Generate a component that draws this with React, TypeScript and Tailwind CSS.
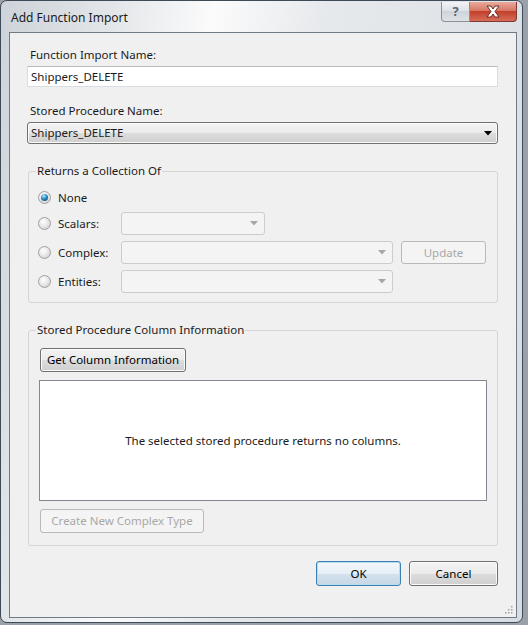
import React from "react";

const font = { fontFamily: '"Noto Sans", "Noto Sans CJK KR", sans-serif' };

const Arrow = ({ color }: { color: string }) => (
  <svg width="8" height="5" viewBox="0 0 8 5">
    <polygon points="0,0 8,0 4,4.5" fill={color} />
  </svg>
);

const Radio = ({ checked }: { checked?: boolean }) => (
  <span className="w-[13px] h-[13px] shrink-0 rounded-full border border-[#a0a0a0] bg-[radial-gradient(circle_at_40%_35%,#ffffff_0%,#e6e6e6_50%,#c6c6c6_100%)] flex items-center justify-center">
    {checked && (
      <span className="w-[7px] h-[7px] rounded-full bg-[radial-gradient(circle_at_40%_30%,#b8ecff_0%,#2a88c0_45%,#0c3f63_100%)]" />
    )}
  </span>
);

const DisabledCombo = ({ className }: { className: string }) => (
  <div
    className={
      "h-[23px] border border-[#cccccc] rounded-[3px] bg-[#f4f4f4] flex items-center justify-end pr-[6px] " +
      className
    }
  >
    <Arrow color="#a6a6a6" />
  </div>
);

const Button = ({
  children,
  className,
  disabled,
  isDefault,
}: {
  children: React.ReactNode;
  className: string;
  disabled?: boolean;
  isDefault?: boolean;
}) => (
  <div
    className={
      "flex items-center justify-center rounded-[3px] border " +
      (disabled
        ? "border-[#b9b9b9] bg-[#f4f4f4] text-[#a8a8a8] "
        : isDefault
        ? "border-[#3c7fb1] bg-[linear-gradient(#f4f8fb_0%,#e6eff6_50%,#d4e2ec_50%,#c6d7e4_100%)] shadow-[inset_0_0_0_1px_#b6dcf3] text-black "
        : "border-[#707070] bg-[linear-gradient(#f3f3f3_0%,#ebebeb_50%,#dddddd_50%,#cfcfcf_100%)] shadow-[inset_0_0_0_1px_#fbfbfb] text-black ") +
      className
    }
  >
    {children}
  </div>
);

const ChoiceRow = ({ label, children }: { label: string; children?: React.ReactNode }) => (
  <div className="h-[23px] flex items-center">
    <Radio />
    <span className="ml-[7px] w-[63px]">{label}</span>
    {children}
  </div>
);

export default function App() {
  return (
    <div className="w-[528px] h-[625px] bg-[#9aa1a8] text-[11.5px] leading-[16px] text-[#1a1a1a]" style={font}>
      <div className="w-[523px] h-[623px] rounded-[7px] border border-[#3d4a57] bg-[linear-gradient(100deg,#cdd3d9_0%,#e3e6e9_18%,#fbfbfb_34%,#e6e9ec_52%,#d8dde2_100%)] flex flex-col">
        {/* title bar */}
        <div className="h-[31px] flex justify-between">
          <div className="pl-[10px] pt-[9px] text-[12px]">Add Function Import</div>
          <div className="flex mr-[5px] h-[20px] mt-[1px]">
            <div className="w-[29px] rounded-bl-[4px] border border-[#8a919a] border-t-0 bg-[linear-gradient(#f2f3f5_0%,#dde1e6_50%,#ced4db_50%,#dfe3e8_100%)] flex items-center justify-center text-[#5b6470] text-[13px] font-bold leading-none">
              ?
            </div>
            <div className="w-[47px] rounded-br-[4px] border border-[#7d3a33] border-t-0 border-l-0 bg-[linear-gradient(#e9a99c_0%,#d4735f_50%,#c2402c_50%,#d66c58_100%)] flex items-center justify-center">
              <svg width="16" height="13" viewBox="0 0 16 13">
                <path
                  d="M2 1 L6 1 L8 4 L10 1 L14 1 L10 6.5 L14 12 L10 12 L8 9 L6 12 L2 12 L6 6.5 Z"
                  fill="#ffffff"
                  stroke="#6e2a22"
                  strokeWidth="1"
                  strokeLinejoin="round"
                />
              </svg>
            </div>
          </div>
        </div>

        {/* client area */}
        <div className="ml-[8px] w-[508px] h-[586px] border border-[#6f7b87] bg-[#f0f0f0] pl-[17px] pr-[18px] pt-[14px] flex flex-col relative">
          <div className="pl-[3px]">Function Import Name:</div>
          <div className="mt-[3px] h-[21px] border border-[#d8dde2] border-t-[#b7bcc1] bg-white flex items-center px-[3px]">
            Shippers_DELETE
          </div>

          <div className="mt-[16px] pl-[3px]">Stored Procedure Name:</div>
          <div className="mt-[3px] h-[22px] rounded-[3px] border border-[#707070] bg-[linear-gradient(#f3f3f3_0%,#ebebeb_50%,#dddddd_50%,#cfcfcf_100%)] shadow-[inset_0_0_0_1px_#fbfbfb] flex items-center justify-between pl-[3px] pr-[5px]">
            <span>Shippers_DELETE</span>
            <Arrow color="#000000" />
          </div>

          <fieldset className="mt-[19px] ml-[1px] border border-[#d5d5d5] rounded-[3px] pl-[9px] pr-[11px] pt-[7px] pb-[9px]">
            <legend className="-ml-[2px] px-[1px]">Returns a Collection Of</legend>
            <div className="h-[23px] flex items-center">
              <Radio checked />
              <span className="ml-[7px]">None</span>
            </div>
            <div className="mt-[3px]">
              <ChoiceRow label="Scalars:">
                <DisabledCombo className="w-[144px]" />
              </ChoiceRow>
            </div>
            <div className="mt-[6px]">
              <ChoiceRow label="Complex:">
                <DisabledCombo className="w-[272px]" />
                <Button disabled className="ml-[8px] w-[85px] h-[23px]">
                  Update
                </Button>
              </ChoiceRow>
            </div>
            <div className="mt-[6px]">
              <ChoiceRow label="Entities:">
                <DisabledCombo className="w-[272px]" />
              </ChoiceRow>
            </div>
          </fieldset>

          <fieldset className="mt-[19px] ml-[1px] border border-[#d5d5d5] rounded-[3px] pl-[10px] pr-[10px] pt-[10px] pb-[12px]">
            <legend className="-ml-[3px] px-[1px]">Stored Procedure Column Information</legend>
            <Button className="ml-[1px] w-[146px] h-[24px]">Get Column Information</Button>
            <div className="mt-[8px] h-[121px] border border-[#828790] bg-white flex items-center justify-center">
              The selected stored procedure returns no columns.
            </div>
            <Button disabled className="mt-[8px] ml-[1px] w-[164px] h-[24px]">
              Create New Complex Type
            </Button>
          </fieldset>

          <div className="mt-[15px] flex justify-end gap-[8px]">
            <Button isDefault className="w-[85px] h-[25px]">
              OK
            </Button>
            <Button className="w-[89px] h-[25px]">Cancel</Button>
          </div>

          {/* size grip */}
          <svg className="absolute right-[3px] bottom-[3px]" width="10" height="10" viewBox="0 0 10 10">
            <rect x="8" y="2" width="1.5" height="1.5" fill="#a0a4a8" />
            <rect x="5" y="5" width="1.5" height="1.5" fill="#a0a4a8" />
            <rect x="8" y="5" width="1.5" height="1.5" fill="#a0a4a8" />
            <rect x="2" y="8" width="1.5" height="1.5" fill="#a0a4a8" />
            <rect x="5" y="8" width="1.5" height="1.5" fill="#a0a4a8" />
            <rect x="8" y="8" width="1.5" height="1.5" fill="#a0a4a8" />
          </svg>
        </div>
      </div>
    </div>
  );
}
